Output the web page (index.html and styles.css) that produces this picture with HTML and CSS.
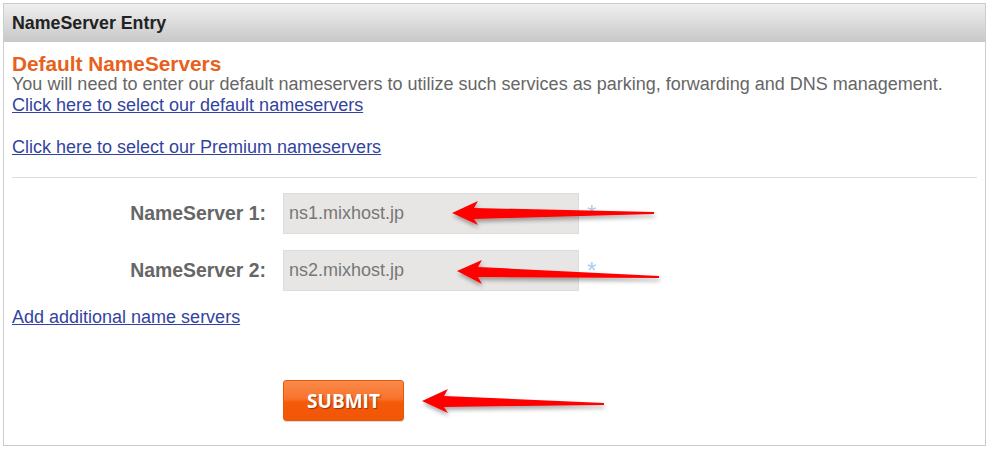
FILE: index.html
```html
<!DOCTYPE html>
<html>
<head>
<meta charset="utf-8">
<link rel="stylesheet" href="styles.css">
</head>
<body>
<div class="page">
  <div class="panel">
    <div class="panel-head">NameServer Entry</div>
    <div class="panel-body">
      <div class="title">Default NameServers</div>
      <div class="desc">You will need to enter our default nameservers to utilize such services as parking, forwarding and DNS management.</div>
      <a class="link" href="#">Click here to select our default nameservers</a>
      <div class="spacer"></div>
      <a class="link" href="#">Click here to select our Premium nameservers</a>
      <hr class="sep">
      <div class="form">
        <label class="label">NameServer 1:</label>
        <div class="field"><div class="input">ns1.mixhost.jp</div><span class="req">*</span></div>
        <label class="label">NameServer 2:</label>
        <div class="field"><div class="input">ns2.mixhost.jp</div><span class="req">*</span></div>
      </div>
      <a class="link add" href="#">Add additional name servers</a>
      <div class="submit-row"><button class="submit">SUBMIT</button></div>
    </div>
  </div>
  <svg class="arrows" width="987" height="451" viewBox="0 0 987 451">
    <defs>
      <filter id="sh" x="-10%" y="-50%" width="120%" height="200%">
        <feGaussianBlur in="SourceAlpha" stdDeviation="2"/>
        <feOffset dx="1" dy="3" result="b"/>
        <feComponentTransfer><feFuncA type="linear" slope="0.35"/></feComponentTransfer>
        <feMerge><feMergeNode/><feMergeNode in="SourceGraphic"/></feMerge>
      </filter>
    </defs>
    <g fill="#ff0000" filter="url(#sh)">
      <path d="M452 213 L478 201 L474 208 L654 212 L654 214 L474 219 L478 225 Z"/>
      <path d="M457 271 L482 260 L478 267 L659 276 L659 278 L478 277 L482 284 Z"/>
      <path d="M422 401 L448 389 L444 396 L604 403 L604 405 L444 407 L448 413 Z"/>
    </g>
  </svg>
</div>
</body>
</html>
```

FILE: styles.css
```css
html, body {
  margin: 0;
  padding: 0;
  background: #ffffff;
}
.page {
  position: relative;
  width: 987px;
  height: 451px;
  padding: 3px;
  box-sizing: border-box;
  font-family: "Liberation Sans", Arial, sans-serif;
}
.panel {
  width: 983px;
  height: 443px;
  box-sizing: border-box;
  border: 1px solid #cccccc;
}
.panel-head {
  height: 38px;
  box-sizing: border-box;
  padding: 0 8px;
  display: flex;
  align-items: center;
  font-size: 17.8px;
  font-weight: bold;
  color: #222222;
  background: linear-gradient(#efefef, #c8c8c8);
}
.panel-body {
  padding: 11px 8px 0 8px;
}
.title {
  font-size: 20.8px;
  line-height: 21px;
  font-weight: bold;
  color: #e8601c;
}
.desc {
  font-size: 18px;
  line-height: 21px;
  color: #666666;
}
.link {
  display: inline-block;
  font-size: 18px;
  line-height: 21px;
  color: #3343a0;
  text-decoration: underline;
}
.spacer {
  height: 21px;
}
.sep {
  border: 0;
  border-top: 1px solid #dddddd;
  margin: 19px 0 15px 0;
  width: 965px;
}
.form {
  display: grid;
  grid-template-columns: 254px auto;
  column-gap: 17px;
  row-gap: 16px;
  align-items: center;
}
.label {
  justify-self: end;
  font-size: 19.4px;
  font-weight: bold;
  color: #666666;
}
.field {
  display: flex;
  align-items: center;
  gap: 8px;
}
.input {
  width: 296px;
  height: 41px;
  box-sizing: border-box;
  border: 1px solid #dcdcdc;
  background: #e7e6e4;
  padding: 0 5px;
  display: flex;
  align-items: center;
  font-size: 18px;
  color: #777777;
}
.req {
  font-size: 24px;
  line-height: 27px;
  color: #a9cfee;
  margin-top: -1px;
}
.add {
  margin-top: 16px;
}
.submit-row {
  padding: 52px 0 0 271px;
}
.submit {
  width: 121px;
  height: 41px;
  border: 1px solid #e35a0c;
  border-radius: 3px;
  background: linear-gradient(#fb8a4a 0%, #f7732c 45%, #f45a08 55%, #f25506 100%);
  color: #ffffff;
  font-family: "Open Sans", "Liberation Sans", sans-serif;
  font-weight: bold;
  font-size: 19px;
  text-shadow: 1px 1px 1px rgba(110, 40, 0, 0.7);
  padding: 0;
  box-shadow: 0 1px 1px rgba(0,0,0,0.15);
}
.arrows {
  position: absolute;
  left: 0;
  top: 0;
  pointer-events: none;
}
```
